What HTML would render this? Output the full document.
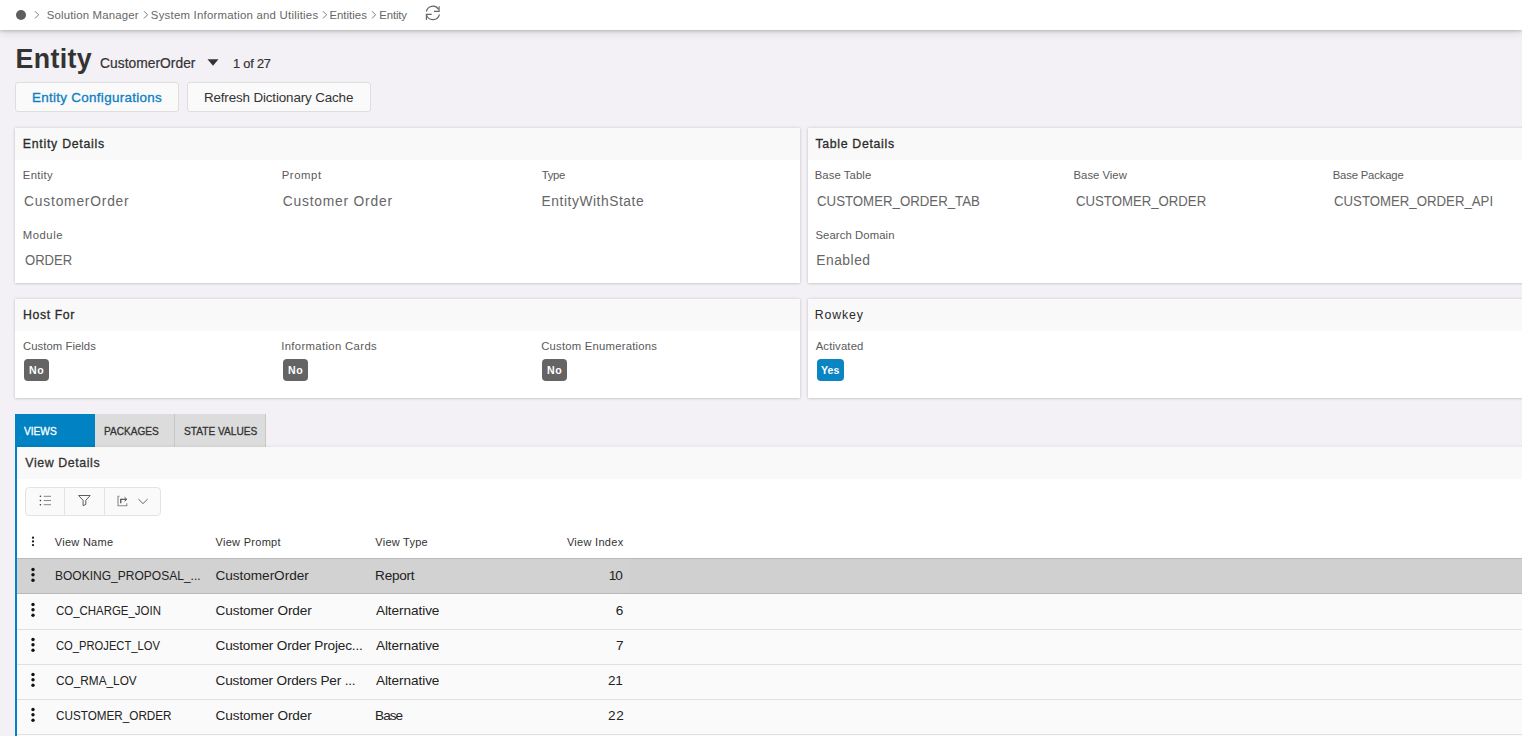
<!DOCTYPE html>
<html><head><meta charset="utf-8">
<style>
*{box-sizing:border-box;margin:0;padding:0}
html,body{width:1522px;height:736px;overflow:hidden}
body{background:#f3f1f5;font-family:"Liberation Sans",sans-serif;color:#333;position:relative}
.a{position:absolute;white-space:nowrap;line-height:normal}
#topbar{position:absolute;left:0;top:0;width:1522px;height:30px;background:#fff;box-shadow:0 1px 3px rgba(0,0,0,.2),0 3px 9px rgba(0,0,0,.1)}
.card{position:absolute;background:#fff;box-shadow:0 0 3px rgba(0,0,0,.16),0 1px 2px rgba(0,0,0,.08)}
.card .hd{position:absolute;left:0;top:0;right:0;height:32px;background:#f9f9f9}
.badge{position:absolute;width:25px;height:22px;border-radius:4px;background:#646464}
.btn{position:absolute;top:82px;height:30px;border:1px solid #dedede;border-radius:3px;background:#fafafa}
.kb{position:absolute;left:31px;width:4px}
.kb i{display:block;width:3.5px;height:3.5px;border-radius:50%;background:#222;margin-bottom:1.6px}
.hl{position:absolute;left:17px;width:1505px;height:1px;background:#e0e0e0}
</style></head><body>
<div id="topbar">
  <div class="a" style="left:16px;top:10px;width:10px;height:10px;border-radius:50%;background:#5e5e5e"></div>
  <svg class="a" style="left:34px;top:10px" width="7" height="10" viewBox="0 0 7 10"><path d="M1 1.2 L4.6 4.8 L1 8.4" fill="none" stroke="#6a6a6a" stroke-width="0.9"/></svg><svg class="a" style="left:142.5px;top:10px" width="7" height="10" viewBox="0 0 7 10"><path d="M1 1.2 L4.6 4.8 L1 8.4" fill="none" stroke="#6a6a6a" stroke-width="0.9"/></svg><svg class="a" style="left:321.5px;top:10px" width="7" height="10" viewBox="0 0 7 10"><path d="M1 1.2 L4.6 4.8 L1 8.4" fill="none" stroke="#6a6a6a" stroke-width="0.9"/></svg><svg class="a" style="left:371px;top:10px" width="7" height="10" viewBox="0 0 7 10"><path d="M1 1.2 L4.6 4.8 L1 8.4" fill="none" stroke="#6a6a6a" stroke-width="0.9"/></svg>
  <svg class="a" style="left:425px;top:5px" width="16" height="16" viewBox="0 0 16 16"><g fill="none" stroke="#666" stroke-width="1.15"><path d="M1.32 6.62A6.7 6.7 0 0 1 13.58 4.35"/><path d="M14.1 1.2V6.4H9"/><path d="M14.45 9.29A6.7 6.7 0 0 1 1.43 9.63"/><path d="M1.4 14.9V9.4H6.7"/></g></svg>
</div>
<svg class="a" style="left:206.5px;top:58.6px" width="12" height="8" viewBox="0 0 12 8"><path d="M0.5 0.2 H11.5 L6 6.8 Z" fill="#333"/></svg>

<div class="btn" style="left:15px;width:164px"></div>
<div class="btn" style="left:187px;width:184px"></div>

<div class="card" style="left:15px;top:128px;width:785px;height:155px"><div class="hd"></div></div>
<div class="card" style="left:808px;top:128px;width:785px;height:155px"><div class="hd"></div></div>
<div class="card" style="left:15px;top:299px;width:785px;height:99px"><div class="hd"></div></div>
<div class="card" style="left:808px;top:299px;width:785px;height:99px"><div class="hd"></div></div>
<div class="badge" style="left:24px;top:359px"></div>
<div class="badge" style="left:283px;top:359px"></div>
<div class="badge" style="left:542px;top:359px"></div>
<div class="badge" style="left:817px;top:359px;width:27px;background:#0a85c4"></div>

<div class="a" style="left:15px;top:414px;width:80px;height:33px;background:#0082c3"></div>
<div class="a" style="left:95px;top:414px;width:80px;height:33px;background:#dcdcdc;border-right:1px solid #c8c8c8"></div>
<div class="a" style="left:175px;top:414px;width:91px;height:33px;background:#dcdcdc;border-right:1px solid #c8c8c8"></div>

<div class="a" style="left:17px;top:447px;width:1600px;height:400px;background:#fff;box-shadow:0 -1px 3px rgba(0,0,0,.06)"></div>
<div class="a" style="left:15px;top:447px;width:2px;height:289px;background:#0082c3"></div>
<div class="a" style="left:17px;top:447px;width:1505px;height:32px;background:#f9f9f9"></div>
<div class="a" style="left:17px;top:479px;width:1505px;height:79px;background:#fff"></div>

<div class="a" style="left:25px;top:487px;width:136px;height:29px;border:1px solid #e3e3e3;border-radius:4px;background:#fafafa"></div>
<div class="a" style="left:64px;top:488px;width:1px;height:27px;background:#e3e3e3"></div>
<div class="a" style="left:104px;top:488px;width:1px;height:27px;background:#e3e3e3"></div>
<svg class="a" style="left:38px;top:494px" width="15" height="13" viewBox="0 0 15 13"><g fill="#333"><rect x="1.6" y="1.5" width="1.6" height="1.6" rx=".8"/><rect x="1.6" y="5.7" width="1.6" height="1.6" rx=".8"/><rect x="1.6" y="9.9" width="1.6" height="1.6" rx=".8"/></g><g stroke="#888" stroke-width="1"><path d="M5.7 2.3H13M5.7 6.5H13M5.7 10.7H13"/></g></svg>
<svg class="a" style="left:77px;top:494px" width="15" height="13" viewBox="0 0 15 13"><path d="M1.6 1.5H13.2L8.8 6.3V10.4L6.1 11.7V6.3Z" fill="none" stroke="#555" stroke-width="0.95" stroke-linejoin="miter"/></svg>
<svg class="a" style="left:116px;top:495px" width="13" height="12" viewBox="0 0 13 12"><path d="M3.5 1.2H2V10.8H10.8V8.3" fill="none" stroke="#888" stroke-width="1.1"/><path d="M4.8 8.3V4.3H10.5" fill="none" stroke="#333" stroke-width="1.1"/><path d="M8.5 2.2L10.8 4.3L8.5 6.4" fill="none" stroke="#555" stroke-width="1"/></svg>
<svg class="a" style="left:137px;top:497px" width="12" height="8" viewBox="0 0 12 8"><path d="M1.3 2L6 6.6L10.7 2" fill="none" stroke="#666" stroke-width="1"/></svg>


<div class="a" style="left:17px;top:558px;width:1505px;height:36px;background:#d0d0d0;border-top:1px solid #b9b9b9;border-bottom:1px solid #b9b9b9"></div>
<div class="a" style="left:17px;top:559px;width:612px;height:34px;background:#d2d2d2"></div>
<div class="a" style="left:17px;top:594px;width:1505px;height:142px;background:#fafafa"></div>
<div class="hl" style="top:629px"></div>
<div class="hl" style="top:664px"></div>
<div class="hl" style="top:699px"></div>
<div class="hl" style="top:734px"></div>

<svg class="a" style="left:28px;top:533px" width="10" height="16" viewBox="0 0 10 16"><g fill="#1a1a2a"><circle cx="5" cy="4.7" r="1.15"/><circle cx="5" cy="8.4" r="1.15"/><circle cx="5" cy="12.1" r="1.15"/></g></svg>
<svg class="a" style="left:28px;top:560px" width="10" height="28" viewBox="0 0 10 28"><g fill="#111"><circle cx="5" cy="9.5" r="1.7"/><circle cx="5" cy="14.8" r="1.7"/><circle cx="5" cy="20.2" r="1.7"/></g></svg>
<svg class="a" style="left:28px;top:595px" width="10" height="28" viewBox="0 0 10 28"><g fill="#111"><circle cx="5" cy="9.5" r="1.7"/><circle cx="5" cy="14.8" r="1.7"/><circle cx="5" cy="20.2" r="1.7"/></g></svg>
<svg class="a" style="left:28px;top:630px" width="10" height="28" viewBox="0 0 10 28"><g fill="#111"><circle cx="5" cy="9.5" r="1.7"/><circle cx="5" cy="14.8" r="1.7"/><circle cx="5" cy="20.2" r="1.7"/></g></svg>
<svg class="a" style="left:28px;top:665px" width="10" height="28" viewBox="0 0 10 28"><g fill="#111"><circle cx="5" cy="9.5" r="1.7"/><circle cx="5" cy="14.8" r="1.7"/><circle cx="5" cy="20.2" r="1.7"/></g></svg>
<svg class="a" style="left:28px;top:700px" width="10" height="28" viewBox="0 0 10 28"><g fill="#111"><circle cx="5" cy="9.5" r="1.7"/><circle cx="5" cy="14.8" r="1.7"/><circle cx="5" cy="20.2" r="1.7"/></g></svg>
<div class="a" id="t0" style="left:46.74px;top:9.01px;font-size:11.4px;font-weight:normal;color:#666;letter-spacing:0.173px;">Solution Manager</div>
<div class="a" id="t1" style="left:150.82px;top:9.01px;font-size:11.4px;font-weight:normal;color:#666;letter-spacing:0.229px;">System Information and Utilities</div>
<div class="a" id="t2" style="left:329.38px;top:9.01px;font-size:11.4px;font-weight:normal;color:#666;letter-spacing:0.029px;">Entities</div>
<div class="a" id="t3" style="left:379.28px;top:9.01px;font-size:11.4px;font-weight:normal;color:#666;letter-spacing:-0.160px;">Entity</div>
<div class="a" id="t4" style="left:15.58px;top:44.01px;font-size:26.8px;font-weight:bold;color:#333;letter-spacing:0.320px;">Entity</div>
<div class="a" id="t5" style="left:100.10px;top:56.01px;font-size:13.8px;font-weight:normal;color:#333;letter-spacing:0.025px;-webkit-text-stroke:0.2px #333;">CustomerOrder</div>
<div class="a" id="t6" style="left:233.02px;top:56.01px;font-size:12.8px;font-weight:normal;color:#333;letter-spacing:-0.200px;-webkit-text-stroke:0.2px #333;">1 of 27</div>
<div class="a" id="t7" style="left:31.94px;top:90.01px;font-size:13.4px;font-weight:normal;color:#0b80c2;letter-spacing:0.310px;-webkit-text-stroke:0.3px #0b80c2;">Entity Configurations</div>
<div class="a" id="t8" style="left:203.92px;top:90.01px;font-size:13.4px;font-weight:normal;color:#333;letter-spacing:-0.135px;">Refresh Dictionary Cache</div>
<div class="a" id="t9" style="left:22.84px;top:137.01px;font-size:12.3px;font-weight:normal;color:#2b2b2b;letter-spacing:0.738px;-webkit-text-stroke:0.3px #2b2b2b;">Entity Details</div>
<div class="a" id="t10" style="left:22.84px;top:169.00px;font-size:11.3px;font-weight:normal;color:#5a5a5a;letter-spacing:0.320px;">Entity</div>
<div class="a" id="t11" style="left:24.10px;top:194.01px;font-size:13.8px;font-weight:normal;color:#666;letter-spacing:0.792px;">CustomerOrder</div>
<div class="a" id="t12" style="left:281.74px;top:169.00px;font-size:11.3px;font-weight:normal;color:#5a5a5a;letter-spacing:0.580px;">Prompt</div>
<div class="a" id="t13" style="left:282.74px;top:194.01px;font-size:13.8px;font-weight:normal;color:#666;letter-spacing:0.800px;">Customer Order</div>
<div class="a" id="t14" style="left:541.72px;top:169.00px;font-size:11.3px;font-weight:normal;color:#5a5a5a;letter-spacing:-0.333px;">Type</div>
<div class="a" id="t15" style="left:541.56px;top:194.01px;font-size:13.8px;font-weight:normal;color:#666;letter-spacing:0.557px;">EntityWithState</div>
<div class="a" id="t16" style="left:22.84px;top:229.01px;font-size:11.3px;font-weight:normal;color:#5a5a5a;letter-spacing:0.520px;">Module</div>
<div class="a" id="t17" style="left:24.54px;top:253.01px;font-size:13.8px;font-weight:normal;color:#666;letter-spacing:0.000px;transform:scaleX(0.9471);transform-origin:0 0;">ORDER</div>
<div class="a" id="t18" style="left:815.46px;top:137.01px;font-size:12.3px;font-weight:normal;color:#2b2b2b;letter-spacing:0.683px;-webkit-text-stroke:0.3px #2b2b2b;">Table Details</div>
<div class="a" id="t19" style="left:814.66px;top:169.00px;font-size:11.3px;font-weight:normal;color:#5a5a5a;letter-spacing:0.100px;">Base Table</div>
<div class="a" id="t20" style="left:817.00px;top:194.01px;font-size:13.8px;font-weight:normal;color:#666;letter-spacing:0.000px;transform:scaleX(0.9600);transform-origin:0 0;">CUSTOMER_ORDER_TAB</div>
<div class="a" id="t21" style="left:1073.56px;top:169.00px;font-size:11.3px;font-weight:normal;color:#5a5a5a;letter-spacing:0.012px;">Base View</div>
<div class="a" id="t22" style="left:1076.18px;top:194.01px;font-size:13.8px;font-weight:normal;color:#666;letter-spacing:0.000px;transform:scaleX(0.9559);transform-origin:0 0;">CUSTOMER_ORDER</div>
<div class="a" id="t23" style="left:1332.66px;top:169.00px;font-size:11.3px;font-weight:normal;color:#5a5a5a;letter-spacing:-0.164px;">Base Package</div>
<div class="a" id="t24" style="left:1334.28px;top:194.01px;font-size:13.8px;font-weight:normal;color:#666;letter-spacing:0.000px;transform:scaleX(0.9576);transform-origin:0 0;">CUSTOMER_ORDER_API</div>
<div class="a" id="t25" style="left:815.46px;top:229.01px;font-size:11.3px;font-weight:normal;color:#5a5a5a;letter-spacing:0.100px;">Search Domain</div>
<div class="a" id="t26" style="left:816.20px;top:253.01px;font-size:13.8px;font-weight:normal;color:#666;letter-spacing:0.533px;">Enabled</div>
<div class="a" id="t27" style="left:23.10px;top:308.00px;font-size:12.3px;font-weight:normal;color:#2b2b2b;letter-spacing:0.571px;-webkit-text-stroke:0.3px #2b2b2b;">Host For</div>
<div class="a" id="t28" style="left:23.10px;top:340.00px;font-size:11.3px;font-weight:normal;color:#5a5a5a;letter-spacing:0.042px;">Custom Fields</div>
<div class="a" id="t29" style="left:281.20px;top:340.00px;font-size:11.3px;font-weight:normal;color:#5a5a5a;letter-spacing:0.356px;">Information Cards</div>
<div class="a" id="t30" style="left:541.18px;top:340.00px;font-size:11.3px;font-weight:normal;color:#5a5a5a;letter-spacing:0.222px;">Custom Enumerations</div>
<div class="a" id="t31" style="left:814.84px;top:308.00px;font-size:12.3px;font-weight:normal;color:#2b2b2b;letter-spacing:0.860px;">Rowkey</div>
<div class="a" id="t32" style="left:815.64px;top:340.00px;font-size:11.3px;font-weight:normal;color:#5a5a5a;letter-spacing:0.163px;">Activated</div>
<div class="a" id="t33" style="left:29.10px;top:364.00px;font-size:10.6px;font-weight:bold;color:#fff;letter-spacing:0.600px;">No</div>
<div class="a" id="t34" style="left:288.10px;top:364.00px;font-size:10.6px;font-weight:bold;color:#fff;letter-spacing:0.600px;">No</div>
<div class="a" id="t35" style="left:547.10px;top:364.00px;font-size:10.6px;font-weight:bold;color:#fff;letter-spacing:0.600px;">No</div>
<div class="a" id="t36" style="left:821.10px;top:364.00px;font-size:10.6px;font-weight:bold;color:#fff;letter-spacing:0.000px;">Yes</div>
<div class="a" id="t37" style="left:23.72px;top:425.00px;font-size:10.6px;font-weight:normal;color:#fff;letter-spacing:0.000px;transform:scaleX(0.9589);transform-origin:0 0;-webkit-text-stroke:0.3px #fff;">VIEWS</div>
<div class="a" id="t38" style="left:103.72px;top:425.00px;font-size:10.6px;font-weight:normal;color:#333;letter-spacing:0.000px;transform:scaleX(0.9507);transform-origin:0 0;-webkit-text-stroke:0.3px #333;">PACKAGES</div>
<div class="a" id="t39" style="left:183.54px;top:425.00px;font-size:10.6px;font-weight:normal;color:#333;letter-spacing:0.000px;transform:scaleX(0.9580);transform-origin:0 0;-webkit-text-stroke:0.3px #333;">STATE VALUES</div>
<div class="a" id="t40" style="left:25.36px;top:456.01px;font-size:12.4px;font-weight:normal;color:#333;letter-spacing:0.573px;-webkit-text-stroke:0.3px #333;">View Details</div>
<div class="a" id="t41" style="left:54.82px;top:536.01px;font-size:11.0px;font-weight:normal;color:#333;letter-spacing:0.275px;">View Name</div>
<div class="a" id="t42" style="left:215.54px;top:536.01px;font-size:11.0px;font-weight:normal;color:#333;letter-spacing:0.290px;">View Prompt</div>
<div class="a" id="t43" style="left:375.36px;top:536.01px;font-size:11.0px;font-weight:normal;color:#333;letter-spacing:0.238px;">View Type</div>
<div class="a" id="t44" style="left:566.90px;top:536.01px;font-size:11.0px;font-weight:normal;color:#333;letter-spacing:0.300px;">View Index</div>
<div class="a" id="t45" style="left:54.92px;top:568.00px;font-size:13.6px;font-weight:normal;color:#222;letter-spacing:0.000px;transform:scaleX(0.8843);transform-origin:0 0;">BOOKING_PROPOSAL_...</div>
<div class="a" id="t46" style="left:215.54px;top:568.00px;font-size:13.6px;font-weight:normal;color:#222;letter-spacing:-0.042px;">CustomerOrder</div>
<div class="a" id="t47" style="left:375.10px;top:568.00px;font-size:13.6px;font-weight:normal;color:#222;letter-spacing:-0.280px;">Report</div>
<div class="a" id="t48" style="left:608.74px;top:568.00px;font-size:13.6px;font-weight:normal;color:#222;letter-spacing:-1.100px;">10</div>
<div class="a" id="t49" style="left:55.72px;top:603.00px;font-size:13.6px;font-weight:normal;color:#222;letter-spacing:0.000px;transform:scaleX(0.8420);transform-origin:0 0;">CO_CHARGE_JOIN</div>
<div class="a" id="t50" style="left:215.54px;top:603.00px;font-size:13.6px;font-weight:normal;color:#222;letter-spacing:-0.092px;">Customer Order</div>
<div class="a" id="t51" style="left:375.90px;top:603.00px;font-size:13.6px;font-weight:normal;color:#222;letter-spacing:-0.070px;">Alternative</div>
<div class="a" id="t52" style="left:615.64px;top:603.00px;font-size:13.6px;font-weight:normal;color:#222;letter-spacing:0.000px;">6</div>
<div class="a" id="t53" style="left:55.72px;top:638.00px;font-size:13.6px;font-weight:normal;color:#222;letter-spacing:0.000px;transform:scaleX(0.8236);transform-origin:0 0;">CO_PROJECT_LOV</div>
<div class="a" id="t54" style="left:215.54px;top:638.00px;font-size:13.6px;font-weight:normal;color:#222;letter-spacing:-0.165px;">Customer Order Projec...</div>
<div class="a" id="t55" style="left:375.90px;top:638.00px;font-size:13.6px;font-weight:normal;color:#222;letter-spacing:-0.070px;">Alternative</div>
<div class="a" id="t56" style="left:616.10px;top:638.00px;font-size:13.6px;font-weight:normal;color:#222;letter-spacing:0.000px;">7</div>
<div class="a" id="t57" style="left:55.72px;top:673.00px;font-size:13.6px;font-weight:normal;color:#222;letter-spacing:0.000px;transform:scaleX(0.8689);transform-origin:0 0;">CO_RMA_LOV</div>
<div class="a" id="t58" style="left:215.54px;top:673.00px;font-size:13.6px;font-weight:normal;color:#222;letter-spacing:-0.191px;">Customer Orders Per ...</div>
<div class="a" id="t59" style="left:375.90px;top:673.00px;font-size:13.6px;font-weight:normal;color:#222;letter-spacing:-0.070px;">Alternative</div>
<div class="a" id="t60" style="left:608.10px;top:673.00px;font-size:13.6px;font-weight:normal;color:#222;letter-spacing:-0.300px;">21</div>
<div class="a" id="t61" style="left:55.72px;top:708.00px;font-size:13.6px;font-weight:normal;color:#222;letter-spacing:0.000px;transform:scaleX(0.8612);transform-origin:0 0;">CUSTOMER_ORDER</div>
<div class="a" id="t62" style="left:215.54px;top:708.00px;font-size:13.6px;font-weight:normal;color:#222;letter-spacing:-0.092px;">Customer Order</div>
<div class="a" id="t63" style="left:375.10px;top:708.00px;font-size:13.6px;font-weight:normal;color:#222;letter-spacing:-1.033px;">Base</div>
<div class="a" id="t64" style="left:608.10px;top:708.00px;font-size:13.6px;font-weight:normal;color:#222;letter-spacing:0.700px;">22</div>
</body></html>
